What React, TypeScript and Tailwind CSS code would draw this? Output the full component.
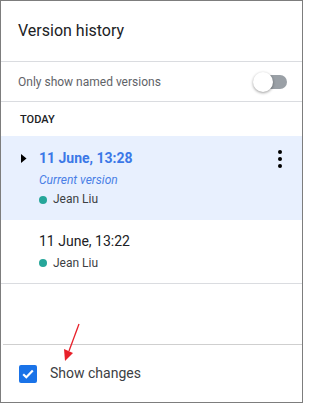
import React from "react";

function Dot() {
  return <span className="inline-block w-[8px] h-[8px] rounded-full bg-[#26a69a] mr-[6px]" />;
}

export default function App() {
  return (
    <div className="relative w-[303px] h-[403px] border border-[#7d7d7d] bg-white flex flex-col font-['Roboto',sans-serif] overflow-hidden">
      {/* Header */}
      <div className="h-[61px] shrink-0 flex items-center pl-[17px] text-[16px] text-[#202124] border-b border-[#dadce0]">
        Version history
      </div>
      {/* Toggle row */}
      <div className="h-[40px] shrink-0 flex items-center justify-between pl-[17px] pr-[15px] border-b border-[#dadce0]">
        <span className="text-[12px] text-[#5f6368] pt-[1px]">Only show named versions</span>
        <div className="relative w-[34px] h-[20px] flex items-center">
          <div className="absolute left-[5px] right-0 h-[14px] rounded-full bg-[#9aa0a6]" />
          <div className="absolute left-0 top-0 w-[20px] h-[20px] rounded-full bg-white shadow-[0_1px_3px_rgba(0,0,0,0.4)]" />
        </div>
      </div>
      {/* Today */}
      <div className="h-[34px] shrink-0 pl-[19px] pt-[8px] text-[11px] leading-[20px] font-medium text-[#202124]">
        TODAY
      </div>
      {/* Selected version */}
      <div className="h-[84px] shrink-0 bg-[#e8f0fe] flex pl-[20px] pr-[19px]">
        <div className="w-[18px] pt-[18px]">
          <svg width="6" height="9" viewBox="0 0 6 9">
            <path d="M0 0 L5.5 4.5 L0 9 Z" fill="#000" />
          </svg>
        </div>
        <div className="flex-1 flex flex-col pt-[12px]">
          <div className="text-[14px] leading-[20px] font-bold text-[#3b78e7]">11 June, 13:28</div>
          <div className="mt-[2px] text-[12px] leading-[20px] italic text-[#4a7fe6]">Current version</div>
          <div className="flex items-center text-[12px] leading-[19px] text-[#3c4043]">
            <Dot />
            Jean Liu
          </div>
        </div>
        <div className="pt-[14px] flex flex-col gap-[3px] items-center w-[6px]">
          <span className="block w-[4px] h-[4px] rounded-full bg-black" />
          <span className="block w-[4px] h-[4px] rounded-full bg-black" />
          <span className="block w-[4px] h-[4px] rounded-full bg-black" />
        </div>
      </div>
      {/* Second version */}
      <div className="h-[64px] shrink-0 pl-[38px] pt-[11px] border-b border-[#dadce0]">
        <div className="text-[14px] leading-[20px] text-[#202124]">11 June, 13:22</div>
        <div className="mt-[2px] flex items-center text-[12px] leading-[20px] text-[#3c4043]">
          <Dot />
          Jean Liu
        </div>
      </div>
      <div className="flex-1" />
      {/* Footer */}
      <div className="h-[58px] shrink-0 border-t border-[#cfcfcf] ml-[2px] flex items-center pl-[16px]">
        <div className="w-[18px] h-[18px] rounded-[2px] bg-[#1a73e8] flex items-center justify-center">
          <svg width="12" height="10" viewBox="0 0 12 10">
            <path d="M1.2 5.2 L4.3 8.2 L10.8 1.6" stroke="#fff" strokeWidth="2.2" fill="none" />
          </svg>
        </div>
        <span className="ml-[13px] text-[14px] text-[#3c4043]">Show changes</span>
      </div>
      {/* Red annotation arrow */}
      <svg className="absolute left-[58px] top-[320px]" width="26" height="44" viewBox="0 0 26 44">
        <line x1="20" y1="3" x2="10" y2="30" stroke="#e8202a" strokeWidth="1.3" />
        <path d="M6 40 L5 28 L14 32 Z" fill="#e8202a" />
      </svg>
    </div>
  );
}
